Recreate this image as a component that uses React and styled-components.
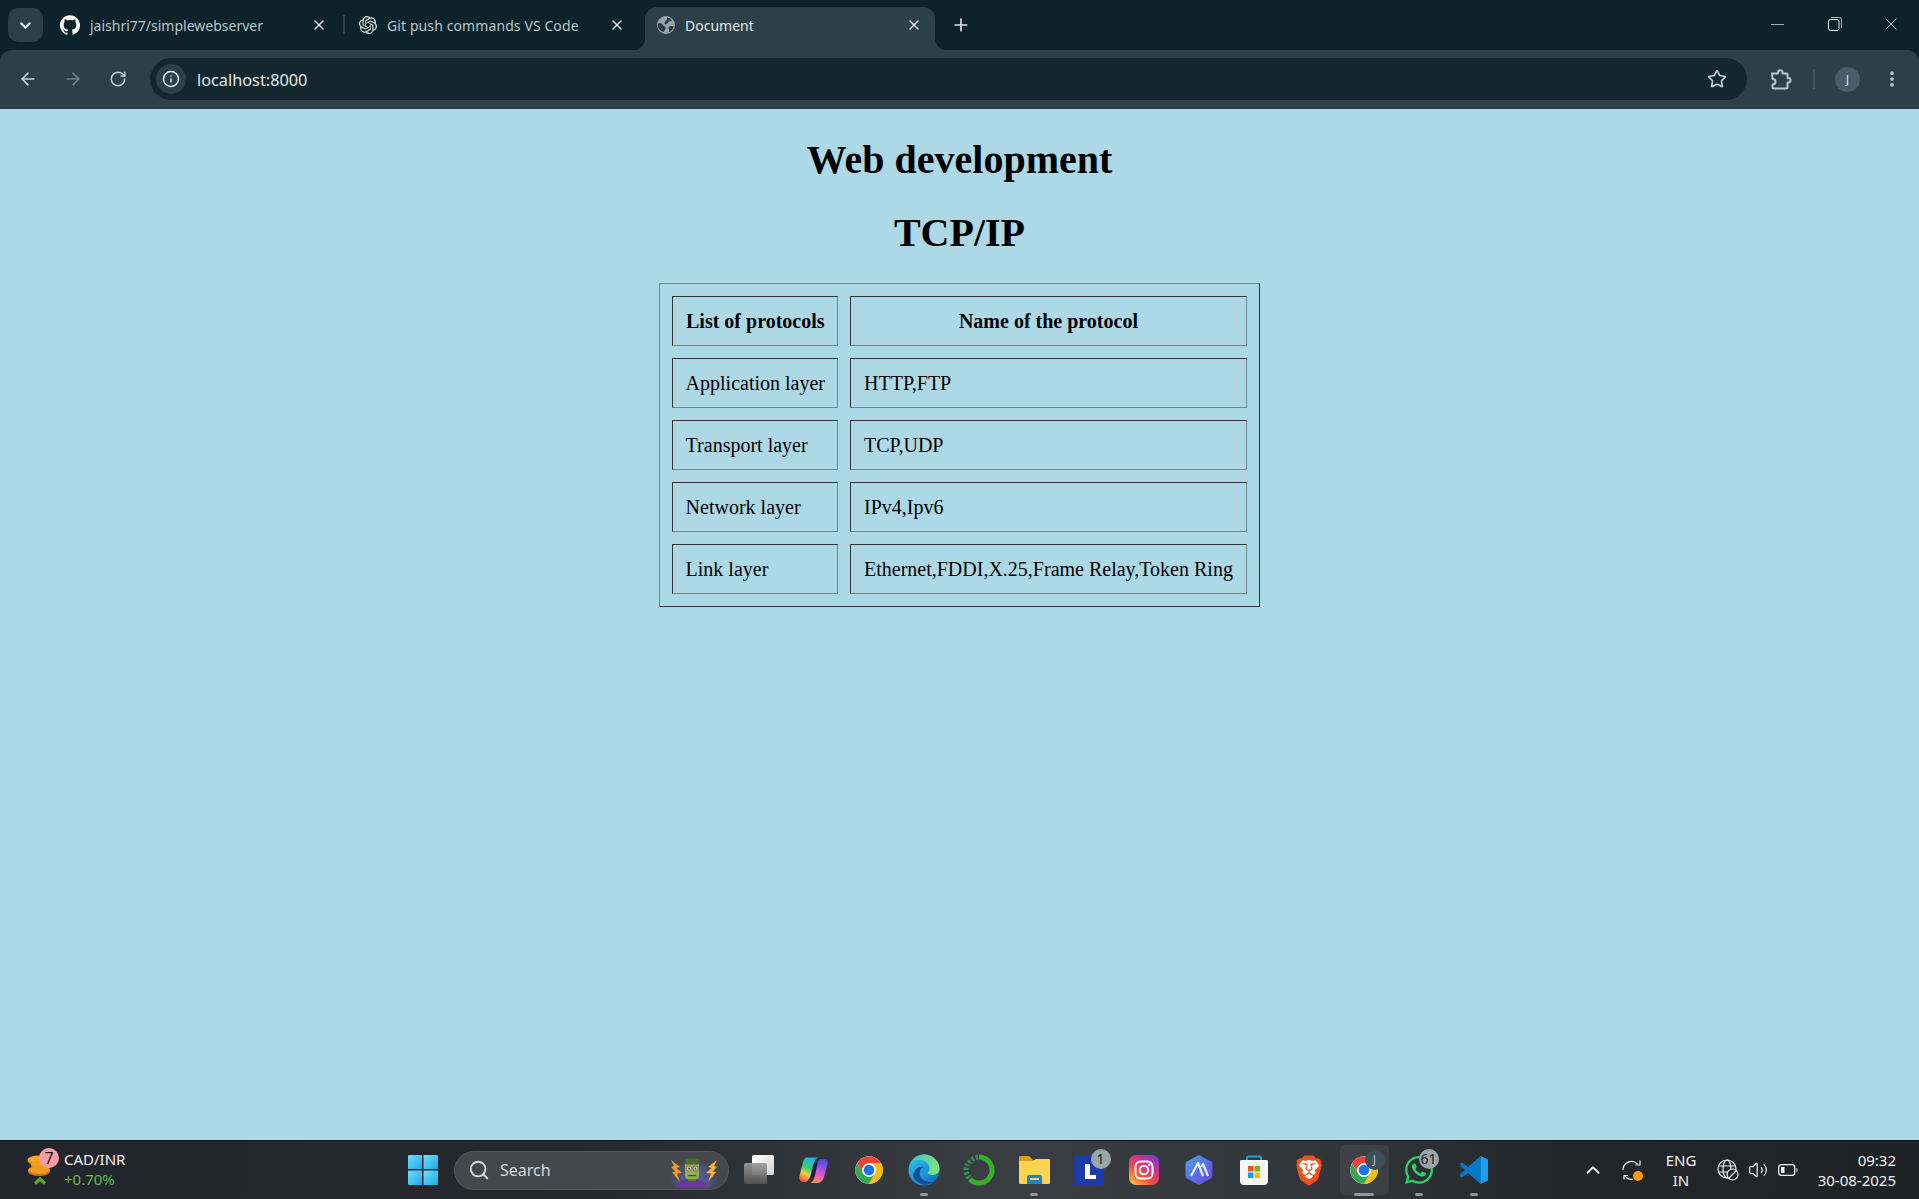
import React from 'react';
import styled, { createGlobalStyle } from 'styled-components';
import {
  ArrowLeft, ArrowRight, RotateCw, Info, Star, EllipsisVertical, Search, X, Plus,
  ChevronDown, ChevronUp, Minus, Volume2,
} from 'lucide-react';
import { SiGithub, SiOpenai, SiBrave } from 'react-icons/si';
import { FaWhatsapp } from 'react-icons/fa';

const UI_FONT = '"Noto Sans", "Open Sans", sans-serif';

const GlobalStyle = createGlobalStyle`
  html, body { margin: 0; padding: 0; background: #0b2229; }
  #root { height: 1199px; }
`;

const Screen = styled.div`
  width: 1919px;
  height: 1199px;
  display: flex;
  flex-direction: column;
  overflow: hidden;
  font-family: ${UI_FONT};
`;

/* ---------- browser chrome ---------- */

const TabStrip = styled.div`
  height: 50px;
  flex: none;
  display: flex;
  align-items: flex-start;
  background: #0c232b;
  color: #c6d0d3;
`;

const TabSwitcher = styled.div`
  width: 35px;
  height: 34px;
  margin: 8px 7px 0 8px;
  border-radius: 10px;
  background: #2c4047;
  display: flex;
  align-items: center;
  justify-content: center;
  color: #e3e9ea;
`;

const Tab = styled.div`
  position: relative;
  box-sizing: border-box;
  width: ${(p) => p.$width}px;
  height: ${(p) => (p.$active ? 43 : 36)}px;
  margin-top: 7px;
  padding: 0 ${(p) => p.$right}px ${(p) => (p.$active ? 7 : 0)}px ${(p) => p.$left}px;
  display: flex;
  align-items: center;
  font-size: 14px;
  letter-spacing: ${(p) => p.$tracking || 0}px;
  color: ${(p) => (p.$active ? '#e3e9ea' : '#bac6ca')};
  background: ${(p) => (p.$active ? '#2c4047' : 'transparent')};
  border-radius: 12px 12px 0 0;

  ${(p) =>
    p.$active &&
    `
    &::before, &::after {
      content: '';
      position: absolute;
      bottom: 0;
      width: 12px;
      height: 12px;
    }
    &::before {
      left: -12px;
      background: radial-gradient(circle at 0 0, transparent 12px, #2c4047 12.5px);
    }
    &::after {
      right: -12px;
      background: radial-gradient(circle at 100% 0, transparent 12px, #2c4047 12.5px);
    }
  `}
`;

const TabIcon = styled.span`
  width: 20px;
  height: 20px;
  flex: none;
  display: flex;
  align-items: center;
  justify-content: center;
  margin-right: ${(p) => p.$gap}px;
  color: ${(p) => p.$color};
`;

const TabTitle = styled.span`
  white-space: nowrap;
`;

const TabClose = styled.span`
  margin-left: auto;
  display: flex;
  color: #dbe3e5;
`;

const TabSeparator = styled.div`
  width: 2px;
  height: 19px;
  margin-top: 15px;
  flex: none;
  background: #2c4047;
`;

const NewTab = styled.div`
  margin: 15px 0 0 16px;
  width: 20px;
  height: 20px;
  display: flex;
  align-items: center;
  justify-content: center;
  color: #dbe3e5;
`;

const WindowControls = styled.div`
  margin-left: auto;
  display: flex;
`;

const WindowButton = styled.div`
  width: 57px;
  height: 48px;
  display: flex;
  align-items: center;
  justify-content: center;
  color: #e8ecec;
  &:last-child { width: 56px; }
`;

const Toolbar = styled.div`
  height: 59px;
  flex: none;
  box-sizing: border-box;
  padding: 8px 12px 7px 5px;
  display: flex;
  align-items: center;
  background: #2c4047;
  border-radius: 12px 12px 0 0;
  border-bottom: 2px solid #273a41;
`;

const NavButton = styled.div`
  width: 45px;
  height: 42px;
  flex: none;
  display: flex;
  align-items: center;
  justify-content: center;
  color: ${(p) => (p.$dim ? '#6f8086' : '#c5d0d3')};
`;

const Omnibox = styled.div`
  flex: 1;
  height: 42px;
  margin-left: 10px;
  box-sizing: border-box;
  padding: 0 20px 0 6px;
  display: flex;
  align-items: center;
  border-radius: 21px;
  background: #14272f;
`;

const SiteInfo = styled.div`
  width: 30px;
  height: 30px;
  border-radius: 50%;
  background: #2c4047;
  display: flex;
  align-items: center;
  justify-content: center;
  color: #e3e9ea;
  margin-right: 11px;
`;

const Url = styled.span`
  font-size: 16.3px;
  line-height: 24px;
  padding-top: 1px;
  color: #e3e9ea;
`;

const BookmarkStar = styled.span`
  margin-left: auto;
  display: flex;
  color: #c5d0d3;
`;

const ToolbarDivider = styled.div`
  width: 2px;
  height: 20px;
  margin: 0 20px 0 12px;
  background: #43555c;
`;

const Avatar = styled.div`
  width: 25px;
  height: 25px;
  border-radius: 50%;
  background: #4a5d6b;
  color: #dfe5e8;
  font-size: 12px;
  display: flex;
  align-items: center;
  justify-content: center;
`;

const Extension = styled.div`
  width: 40px;
  margin-left: 14px;
  display: flex;
  justify-content: center;
  color: #b6c8ce;
`;

const MenuButton = styled.div`
  width: 30px;
  margin-left: 17px;
  display: flex;
  justify-content: center;
  color: #b6c8ce;
`;

/* ---------- page ---------- */

const Page = styled.main`
  flex: 1;
  padding-top: 1.5px;
  background: lightblue;
  overflow: hidden;
  color: #000;
  font-family: "Liberation Serif", "Times New Roman", serif;
  font-size: 20px;
`;

const Heading = styled.h1`
  margin: 26.8px 0;
  font-size: 40px;
  line-height: 46px;
  font-weight: bold;
  text-align: center;
`;

const ProtocolTable = styled.table`
  margin: 26.5px auto 0;
  border-width: 1px;
  border-style: solid;
  border-color: #75848b #333 #333 #75848b;
  border-spacing: 12.5px;
  border-collapse: separate;
  font-size: 20px;
`;

const HeadCell = styled.th`
  border-width: 1px;
  border-style: solid;
  border-color: #333 #75848b #75848b #333;
  padding: 13.5px 13px 11.5px;
  line-height: 23px;
  font-weight: bold;
  text-align: center;
  &:first-child { padding-left: 12.5px; padding-right: 12px; }
`;

const Cell = styled.td`
  border-width: 1px;
  border-style: solid;
  border-color: #333 #75848b #75848b #333;
  padding: 13.5px 13px 11.5px;
  line-height: 23px;
  text-align: left;
  &:first-child { padding-left: 12.5px; padding-right: 12px; }
`;

/* ---------- taskbar ---------- */

const Taskbar = styled.footer`
  height: 59px;
  flex: none;
  box-sizing: border-box;
  border-top: 1px solid #14171b;
  display: flex;
  align-items: center;
  color: #f2f3f4;
  background: linear-gradient(90deg, #22252b 0%, #25282d 30%, #3a3d41 52%, #33363a 68%, #232629 82%, #1f2227 100%);
`;

const Widget = styled.div`
  width: 395px;
  flex: none;
  height: 100%;
  box-sizing: border-box;
  padding-left: 27px;
  display: flex;
  align-items: center;
`;

const WidgetArt = styled.div`
  position: relative;
  width: 24px;
  height: 36px;
  margin-right: 13px;
  flex: none;
`;

const CountBadge = styled.span`
  position: absolute;
  top: ${(p) => p.$top}px;
  left: ${(p) => p.$left}px;
  min-width: 20px;
  height: 20px;
  border-radius: 10px;
  background: ${(p) => p.$bg};
  color: ${(p) => p.$fg};
  font-size: ${(p) => p.$size || 14}px;
  line-height: 20px;
  text-align: center;
`;

const WidgetText = styled.div`
  display: flex;
  flex-direction: column;
  padding-bottom: 2px;
  font-size: 15px;
  line-height: 20px;
`;

const WidgetChange = styled.span`
  color: #62bb4f;
`;

const TaskSlot = styled.div`
  position: relative;
  width: 55px;
  height: 100%;
  flex: none;
  display: flex;
  align-items: center;
  justify-content: center;
  ${(p) =>
    p.$active &&
    `
    &::before {
      content: '';
      position: absolute;
      left: 3px;
      right: 3px;
      top: 4px;
      bottom: 4px;
      border-radius: 5px;
      background: rgba(255, 255, 255, 0.07);
    }
  `}
  svg { position: relative; }
`;

const RunningDot = styled.span`
  position: absolute;
  bottom: 3px;
  left: 50%;
  width: ${(p) => (p.$wide ? 20 : 8)}px;
  height: 3.5px;
  margin-left: ${(p) => (p.$wide ? -10 : -4)}px;
  border-radius: 2px;
  background: #94979a;
`;

const SearchBox = styled.div`
  width: 275px;
  height: 39px;
  margin: 0 2.5px 0 4px;
  flex: none;
  box-sizing: border-box;
  padding: 0 10px 0 13px;
  border-radius: 20px;
  background: #44474c;
  border: 1px solid #54575b;
  display: flex;
  align-items: center;
  font-size: 16px;
  color: #d8d9da;
`;

const SearchLabel = styled.span`
  margin-left: 10px;
`;

const Mascot = styled.span`
  margin-left: auto;
  display: flex;
`;

const BraveArt = styled.div`
  width: 30px;
  height: 32px;
  display: flex;
  align-items: center;
  justify-content: center;
  background: radial-gradient(circle at 50% 45%, #fff 0 10px, transparent 11px);
`;

const Tray = styled.div`
  margin-left: auto;
  height: 100%;
  display: flex;
  align-items: center;
  padding-right: 23px;
`;

const TrayIcon = styled.span`
  position: relative;
  display: flex;
  align-items: center;
  justify-content: center;
  width: ${(p) => p.$width}px;
  color: #f2f3f4;
`;

const SyncDot = styled.span`
  position: absolute;
  right: 6px;
  bottom: -1px;
  width: 10px;
  height: 10px;
  border-radius: 50%;
  background: #ff9a0a;
`;

const TrayText = styled.div`
  width: ${(p) => p.$width}px;
  padding-bottom: 1px;
  display: flex;
  flex-direction: column;
  align-items: ${(p) => p.$align};
  font-size: 15px;
  line-height: 20px;
  color: #f2f3f4;
`;

/* ---------- drawings ---------- */

const ChromeLogo = ({ size = 30 }) => (
  <svg width={size} height={size} viewBox="0 0 48 48">
    <circle cx="24" cy="24" r="22" fill="#fff" />
    <path fill="#ea4335" d="M43.05 13A22 22 0 0 0 4.95 13L14.47 29.5A11 11 0 0 1 24 13Z" />
    <path fill="#fbbc04" transform="rotate(120 24 24)" d="M43.05 13A22 22 0 0 0 4.95 13L14.47 29.5A11 11 0 0 1 24 13Z" />
    <path fill="#34a853" transform="rotate(240 24 24)" d="M43.05 13A22 22 0 0 0 4.95 13L14.47 29.5A11 11 0 0 1 24 13Z" />
    <circle cx="24" cy="24" r="10.5" fill="#fff" />
    <circle cx="24" cy="24" r="8.5" fill="#1a73e8" />
  </svg>
);

const TabGlobe = () => (
  <svg width="18" height="18" viewBox="0 0 18 18">
    <circle cx="9" cy="9" r="9" fill="#9aa6ab" />
    <path fill="#2c4047" d="M1 7.500C3 6.500 5 7 5.500 8.500 6 10 8 10 8.500 11.500 9 13 7.500 14 7 16 4.500 15.500 2 14 1.200 11.500.9 10 .8 8.500 1 7.500z" />
    <path fill="#2c4047" d="M10 1.200c2 .3 4 1.500 5 3-1 .8-2.500 1-3.500 1.800-1 .8-1 2.500-2.500 2.300C7.500 8 7 6.500 8 5.500 9 4.500 10.500 3.500 10 1.200z" />
    <path fill="#2c4047" d="M12 10.500c1.500-.5 3.500-.5 4.800-.5-.3 2.500-2 5-4.300 6.300-.5-1.800-1.500-4.800-.5-5.800z" />
  </svg>
);

const ExtensionIcon = () => (
  <svg width="22" height="22" viewBox="0 0 22 22" fill="none" stroke="currentColor" strokeWidth="2" strokeLinejoin="round">
    <path d="M2 5.500h6V4.500a2.200 2.200 0 0 1 4.400 0v1h4.100a1 1 0 0 1 1 1V10h.8a2.200 2.200 0 0 1 0 4.400h-.8V19.500a1 1 0 0 1-1 1H3.500a1 1 0 0 1-1-1V16.500c2.200 0 3-1.300 3-2.800S4.200 11 2.500 11z" />
  </svg>
);

const WindowsLogo = () => (
  <svg width="30" height="30" viewBox="0 0 30 30">
    <defs>
      <linearGradient id="winA" x1="0" y1="0" x2="1" y2="1">
        <stop offset="0" stopColor="#6fe0fb" />
        <stop offset="1" stopColor="#19a9ec" />
      </linearGradient>
    </defs>
    <path fill="url(#winA)" d="M1 0h13v14H0V1a1 1 0 0 1 1-1z" />
    <path fill="url(#winA)" d="M15.500 0H29a1 1 0 0 1 1 1v13H15.500z" />
    <path fill="url(#winA)" d="M0 15.500h14V30H1a1 1 0 0 1-1-1z" />
    <path fill="url(#winA)" d="M15.500 15.500H30V29a1 1 0 0 1-1 1H15.500z" />
  </svg>
);

const TaskViewIcon = () => (
  <svg width="32" height="30" viewBox="0 0 32 30">
    <defs>
      <linearGradient id="tvFront" x1="0" y1="0" x2="1" y2="1">
        <stop offset="0" stopColor="#ffffff" />
        <stop offset="1" stopColor="#d4d4d4" />
      </linearGradient>
      <linearGradient id="tvBack" x1="0" y1="0" x2="0" y2="1">
        <stop offset="0" stopColor="#9a9a9a" />
        <stop offset="1" stopColor="#555555" />
      </linearGradient>
    </defs>
    <rect x="9" y="0" width="22" height="20" rx="1.500" fill="url(#tvFront)" />
    <rect x="1" y="8" width="23" height="21" rx="1.500" fill="url(#tvBack)" fillOpacity="0.92" />
  </svg>
);

const CopilotIcon = () => (
  <svg width="30" height="26" viewBox="0 0 30 26">
    <defs>
      <linearGradient id="copL" x1="0.6" y1="0" x2="0.25" y2="1">
        <stop offset="0" stopColor="#18b4f0" />
        <stop offset="0.4" stopColor="#2fd07a" />
        <stop offset="0.68" stopColor="#e8d03a" />
        <stop offset="1" stopColor="#f0503c" />
      </linearGradient>
      <linearGradient id="copR" x1="0.6" y1="0" x2="0.3" y2="1">
        <stop offset="0" stopColor="#3f4fe0" />
        <stop offset="0.35" stopColor="#a050e8" />
        <stop offset="0.7" stopColor="#f060b0" />
        <stop offset="1" stopColor="#ff9040" />
      </linearGradient>
    </defs>
    <path fill="#1c1a50" d="M13 6h7l-3 15h-7z" />
    <path fill="url(#copL)" d="M8 .500h11c-3 1.500-4 4.500-5 8.500l-2 8c-1 4-3 8-6 8H4c-3 0-4.500-3-3.500-6L4 5C5 2 6 .500 8 .500z" />
    <path fill="url(#copR)" d="M22 2h3c3 0 4.500 2 3.500 5L25 20c-1 4-4 6-7 6h-7c3-1 4-4 5-8l2-9c1-4 2-7 4-7z" />
  </svg>
);

const EdgeIcon = () => (
  <svg width="32" height="32" viewBox="0 0 32 32">
    <defs>
      <linearGradient id="edgeA" x1="0" y1="0" x2="1" y2="1">
        <stop offset="0" stopColor="#2fc6e6" />
        <stop offset="0.6" stopColor="#1f8fd8" />
        <stop offset="1" stopColor="#0e5fb0" />
      </linearGradient>
      <linearGradient id="edgeB" x1="0" y1="0" x2="1" y2="0.3">
        <stop offset="0" stopColor="#38c9c2" />
        <stop offset="1" stopColor="#7ee07f" />
      </linearGradient>
    </defs>
    <circle cx="16" cy="16" r="15.500" fill="url(#edgeA)" />
    <path fill="url(#edgeB)" d="M16 .500c9 0 15.500 7 15.500 14 0 4-3 6.500-7 6.500-2.500 0-4.500-.8-5.500-2 1.500-1 2.500-2.500 2.500-4.500C21.500 9 16 5 9 6 5 6.500 3.500 9 2 12 3.500 5.500 9 .500 16 .500z" />
    <path fill="#0b4f9c" d="M5 22c1-7 6-10 11-9-3 1-5 4-4 8 1 4 5 7 10 7 2 0 3.500-.5 5-1.500-3 3-7 4.500-11 4-5-.7-9-3.500-11-8.500z" />
  </svg>
);

const ProgressRing = () => (
  <svg width="32" height="32" viewBox="0 0 32 32" fill="none">
    <path d="M16 3a13 13 0 1 1-9.200 22.200" stroke="#36b02b" strokeWidth="5" />
    <path d="M6 24a13 13 0 0 1-1.500-14M6 9a13 13 0 0 1 9-6" stroke="#2f8f55" strokeWidth="5" strokeDasharray="2.500 1.800" />
  </svg>
);

const FolderIcon = () => (
  <svg width="31" height="28" viewBox="0 0 31 28">
    <path fill="#dd9f12" d="M1 0h9l4 4h16a1 1 0 0 1 1 1v6H0V1a1 1 0 0 1 1-1z" />
    <path fill="#fcd44f" d="M0 5h14l3-2h13a1 1 0 0 1 1 1v23a1 1 0 0 1-1 1H1a1 1 0 0 1-1-1z" />
    <path fill="#1583d6" d="M8 28v-7a2 2 0 0 1 2-2h11a2 2 0 0 1 2 2v7z" />
    <rect x="11" y="22" width="9" height="2" fill="#fcd44f" />
  </svg>
);

const LIcon = () => (
  <svg width="30" height="30" viewBox="0 0 30 30">
    <rect width="30" height="30" fill="#1b3aa6" />
    <path fill="#fff" d="M11 9h5v11h6v4H11z" />
  </svg>
);

const InstagramIcon = () => (
  <svg width="30" height="30" viewBox="0 0 30 30" fill="none">
    <defs>
      <linearGradient id="igA" x1="0.1" y1="1" x2="0.9" y2="0">
        <stop offset="0" stopColor="#fdc33f" />
        <stop offset="0.35" stopColor="#f2503c" />
        <stop offset="0.65" stopColor="#d32f92" />
        <stop offset="1" stopColor="#6a3fd0" />
      </linearGradient>
    </defs>
    <rect width="30" height="30" rx="7" fill="url(#igA)" />
    <rect x="6.500" y="6.500" width="17" height="17" rx="5" stroke="#fff" strokeWidth="2" />
    <circle cx="15" cy="15" r="4.200" stroke="#fff" strokeWidth="2" />
    <circle cx="20.300" cy="9.700" r="1.200" fill="#fff" />
  </svg>
);

const HexAppIcon = () => (
  <svg width="28" height="32" viewBox="0 0 28 32" fill="none">
    <defs>
      <linearGradient id="hexA" x1="0" y1="0" x2="1" y2="1">
        <stop offset="0" stopColor="#4aa4e8" />
        <stop offset="1" stopColor="#6a3fe0" />
      </linearGradient>
    </defs>
    <path fill="url(#hexA)" d="M14 1l12 6.500a3 3 0 0 1 1.500 2.500v12a3 3 0 0 1-1.500 2.500L14 31 2 24.500A3 3 0 0 1 .5 22V10A3 3 0 0 1 2 7.500z" />
    <path d="M6 22L13 9l5 13M16 13l2-3 5 12" stroke="#e6ecff" strokeWidth="2.200" strokeLinejoin="round" />
  </svg>
);

const StoreIcon = () => (
  <svg width="30" height="30" viewBox="0 0 30 30" fill="none">
    <path d="M8 7V3a1.500 1.500 0 0 1 1.500-1.500h11A1.500 1.500 0 0 1 22 3v4" stroke="#18a0dc" strokeWidth="2" />
    <path fill="#f6f6f6" d="M2 5h26a1 1 0 0 1 1 1v20a4 4 0 0 1-4 4H5a4 4 0 0 1-4-4V6a1 1 0 0 1 1-1z" />
    <rect x="9" y="11" width="5.500" height="5.500" fill="#f25022" />
    <rect x="15.500" y="11" width="5.500" height="5.500" fill="#7fba00" />
    <rect x="9" y="17.500" width="5.500" height="5.500" fill="#00a4ef" />
    <rect x="15.500" y="17.500" width="5.500" height="5.500" fill="#ffb900" />
  </svg>
);

const VsCodeIcon = () => (
  <svg width="30" height="30" viewBox="0 0 30 30">
    <path fill="#0065a9" d="M8.500 15.500 2.200 20.300.4 18.800 6.200 15 .4 11.200 2.200 9.700z" />
    <path fill="#007acc" d="M21.500 1 9 12 3 7.500.5 9l6 6-6 6L3 22.500 9 18l12.500 11z" />
    <path fill="#1f9cf0" d="M21.500 1l7.500 3.500v21L21.500 29z" />
  </svg>
);

const CoinStack = () => (
  <svg width="24" height="36" viewBox="0 0 24 36">
    <ellipse cx="12" cy="9" rx="11.500" ry="4.500" fill="#d97f0a" />
    <ellipse cx="12" cy="7.500" rx="11.500" ry="4" fill="#f5a623" />
    <ellipse cx="14" cy="14" rx="10" ry="4.500" fill="#d97f0a" />
    <ellipse cx="14" cy="12.500" rx="10" ry="4" fill="#f59e1c" />
    <ellipse cx="12" cy="19.500" rx="11" ry="4.500" fill="#c9740a" />
    <ellipse cx="12" cy="18" rx="11" ry="4" fill="#ef9a18" />
    <path d="M8 31.500l5-4.500 5 4.500" fill="none" stroke="#5da80e" strokeWidth="3.500" />
  </svg>
);

const FrankMascot = () => (
  <svg width="48" height="36" viewBox="0 0 48 36">
    <defs>
      <radialGradient id="mascotGlow" cx="0.5" cy="0.75" r="0.55">
        <stop offset="0" stopColor="#5f62a8" />
        <stop offset="0.7" stopColor="#4b4f78" />
        <stop offset="1" stopColor="#44474c" stopOpacity="0" />
      </radialGradient>
    </defs>
    <rect width="48" height="36" fill="url(#mascotGlow)" />
    <path fill="#6b35a0" d="M7 36c0-6 6-8.500 15-8.500S37 30 37 36z" />
    <rect x="18" y="24" width="8" height="5" fill="#5f7a3a" />
    <rect x="15" y="9" width="14" height="18" rx="3.500" fill="#8fb04e" />
    <rect x="15" y="6.500" width="14" height="6" rx="1.500" fill="#4a6a38" />
    <circle cx="19" cy="16.500" r="2.600" fill="#c9d29a" stroke="#b0603a" strokeWidth="0.9" />
    <circle cx="25.500" cy="16.500" r="2.600" fill="#c9d29a" stroke="#8050a0" strokeWidth="0.9" />
    <circle cx="19" cy="16.500" r="0.900" fill="#3a3040" />
    <circle cx="25.500" cy="16.500" r="0.900" fill="#3a3040" />
    <rect x="18" y="23" width="8" height="1.300" fill="#46552c" />
    <path fill="#f59a23" d="M1 8l9 7-3.500 1 5.500 5-5 .5 3 8.500-8-10 3.500-.5L1 15l3-1z" />
    <path fill="#fbb431" d="M47 8l-9 7 3.500 1-5.500 5 5 .5-3 8.500 8-10-3.500-.5L47 15l-3-1z" />
  </svg>
);

const RestoreIcon = () => (
  <svg width="14" height="14" viewBox="0 0 14 14" fill="none" stroke="currentColor" strokeWidth="1">
    <rect x="0.500" y="2.500" width="10.500" height="11" rx="2" />
    <path d="M3 .5h8.500a2 2 0 0 1 2 2V11" opacity="0.75" />
  </svg>
);

const SyncIcon = () => (
  <svg width="20" height="20" viewBox="0 0 20 20" fill="none" stroke="currentColor" strokeWidth="1.200">
    <path d="M1 10a8.500 8.500 0 0 1 14.500-6" />
    <path d="M18 .5v4.500h-4.500" />
    <path d="M1.500 15.500h4.500M2 19.500v-4" />
    <path d="M3 15.800a8.500 8.500 0 0 0 8 3.500" />
  </svg>
);

const NetworkIcon = () => (
  <svg width="22" height="22" viewBox="0 0 22 22" fill="none" stroke="currentColor" strokeWidth="1.200">
    <circle cx="10" cy="10" r="9" />
    <ellipse cx="10" cy="10" rx="4" ry="9" />
    <path d="M1.500 7h17M1.500 13h17" />
    <circle cx="15.500" cy="15.500" r="5.500" fill="#24272b" />
    <path d="M12 19l7-7" />
  </svg>
);

const BatteryIcon = () => (
  <svg width="20" height="14" viewBox="0 0 20 14" fill="none">
    <rect x="0.700" y="1.700" width="16" height="10.600" rx="2.500" stroke="currentColor" strokeWidth="1.300" />
    <rect x="3" y="4" width="3.500" height="6" fill="currentColor" />
    <path d="M18.500 5v4a1 1 0 0 0 1-1V6a1 1 0 0 0-1-1z" fill="currentColor" />
  </svg>
);

const TASK_APPS = [
  { key: 'taskview', icon: <TaskViewIcon /> },
  { key: 'copilot', icon: <CopilotIcon /> },
  { key: 'chrome', icon: <ChromeLogo /> },
  { key: 'edge', icon: <EdgeIcon />, running: true },
  { key: 'ring', icon: <ProgressRing /> },
  { key: 'folder', icon: <FolderIcon />, running: true },
  { key: 'l', icon: <LIcon />, badge: '1', badgeLeft: 29 },
  { key: 'instagram', icon: <InstagramIcon /> },
  { key: 'hex', icon: <HexAppIcon /> },
  { key: 'store', icon: <StoreIcon /> },
  { key: 'brave', icon: <BraveArt><SiBrave size={31} color="#f4501e" /></BraveArt> },
  { key: 'chrome2', icon: <ChromeLogo />, active: true },
  { key: 'whatsapp', icon: <FaWhatsapp size={32} color="#25d366" />, running: true, badge: '61', badgeLeft: 27 },
  { key: 'vscode', icon: <VsCodeIcon />, running: true },
];

const rows = [
  ['Application layer', 'HTTP,FTP'],
  ['Transport layer', 'TCP,UDP'],
  ['Network layer', 'IPv4,Ipv6'],
  ['Link layer', 'Ethernet,FDDI,X.25,Frame Relay,Token Ring'],
];

const App = () => (
  <Screen>
    <GlobalStyle />

    <TabStrip>
      <TabSwitcher><ChevronDown size={17} strokeWidth={3} /></TabSwitcher>
      <Tab $width={293} $left={10} $right={16}>
        <TabIcon $gap={10} $color="#ffffff"><SiGithub size={20} /></TabIcon>
        <TabTitle>jaishri77/simplewebserver</TabTitle>
        <TabClose><X size={16} strokeWidth={2.2} /></TabClose>
      </Tab>
      <TabSeparator />
      <Tab $width={300} $left={13} $right={20} $tracking={0.1}>
        <TabIcon $gap={9} $color="#dfe5e7"><SiOpenai size={18} /></TabIcon>
        <TabTitle>Git push commands VS Code</TabTitle>
        <TabClose><X size={16} strokeWidth={2.2} /></TabClose>
      </Tab>
      <Tab $active $width={290} $left={11} $right={13}>
        <TabIcon $gap={9} $color="#9aa6ab"><TabGlobe /></TabIcon>
        <TabTitle>Document</TabTitle>
        <TabClose><X size={16} strokeWidth={2.2} /></TabClose>
      </Tab>
      <NewTab><Plus size={20} strokeWidth={2} /></NewTab>
      <WindowControls>
        <WindowButton><Minus size={21} strokeWidth={0.8} /></WindowButton>
        <WindowButton><RestoreIcon /></WindowButton>
        <WindowButton><X size={20} strokeWidth={1} /></WindowButton>
      </WindowControls>
    </TabStrip>

    <Toolbar>
      <NavButton><ArrowLeft size={20} strokeWidth={2} /></NavButton>
      <NavButton $dim><ArrowRight size={20} strokeWidth={2} /></NavButton>
      <NavButton><RotateCw size={18} strokeWidth={2} /></NavButton>
      <Omnibox>
        <SiteInfo><Info size={18} strokeWidth={2} /></SiteInfo>
        <Url>localhost:8000</Url>
        <BookmarkStar><Star size={20} strokeWidth={2} /></BookmarkStar>
      </Omnibox>
      <Extension><ExtensionIcon /></Extension>
      <ToolbarDivider />
      <Avatar>J</Avatar>
      <MenuButton><EllipsisVertical size={20} strokeWidth={2.5} /></MenuButton>
    </Toolbar>

    <Page>
      <Heading>Web development</Heading>
      <Heading>TCP/IP</Heading>
      <ProtocolTable>
        <thead>
          <tr>
            <HeadCell>List of protocols</HeadCell>
            <HeadCell>Name of the protocol</HeadCell>
          </tr>
        </thead>
        <tbody>
          {rows.map(([layer, names]) => (
            <tr key={layer}>
              <Cell>{layer}</Cell>
              <Cell>{names}</Cell>
            </tr>
          ))}
        </tbody>
      </ProtocolTable>
    </Page>

    <Taskbar>
      <Widget>
        <WidgetArt>
          <CoinStack />
          <CountBadge $top={-4} $left={12} $bg="#f99ea5" $fg="#1c1214" $size={16}>7</CountBadge>
        </WidgetArt>
        <WidgetText>
          <span>CAD/INR</span>
          <WidgetChange>+0.70%</WidgetChange>
        </WidgetText>
      </Widget>
      <TaskSlot><WindowsLogo /></TaskSlot>
      <SearchBox>
        <Search size={22} strokeWidth={2} />
        <SearchLabel>Search</SearchLabel>
        <Mascot><FrankMascot /></Mascot>
      </SearchBox>
      {TASK_APPS.map((app) => (
        <TaskSlot key={app.key} $active={app.active}>
          {app.icon}
          {app.badge && (
            <CountBadge $top={8} $left={app.badgeLeft} $bg="#9aa5a8" $fg="#1c2226">
              {app.badge}
            </CountBadge>
          )}
          {app.active && (
            <CountBadge $top={9} $left={28} $bg="#3c4f5b" $fg="#b6c2c9" $size={12}>J</CountBadge>
          )}
          {app.running && <RunningDot />}
          {app.active && <RunningDot $wide />}
        </TaskSlot>
      ))}
      <Tray>
        <TrayIcon $width={44}><ChevronUp size={22} strokeWidth={2} /></TrayIcon>
        <TrayIcon $width={34}><SyncIcon /><SyncDot /></TrayIcon>
        <TrayText $width={64} $align="center">
          <span>ENG</span>
          <span>IN</span>
        </TrayText>
        <TrayIcon $width={30}><NetworkIcon /></TrayIcon>
        <TrayIcon $width={30}><Volume2 size={20} strokeWidth={1.4} /></TrayIcon>
        <TrayIcon $width={30}><BatteryIcon /></TrayIcon>
        <TrayText $width={93} $align="flex-end">
          <span>09:32</span>
          <span>30-08-2025</span>
        </TrayText>
      </Tray>
    </Taskbar>
  </Screen>
);

export default App;
